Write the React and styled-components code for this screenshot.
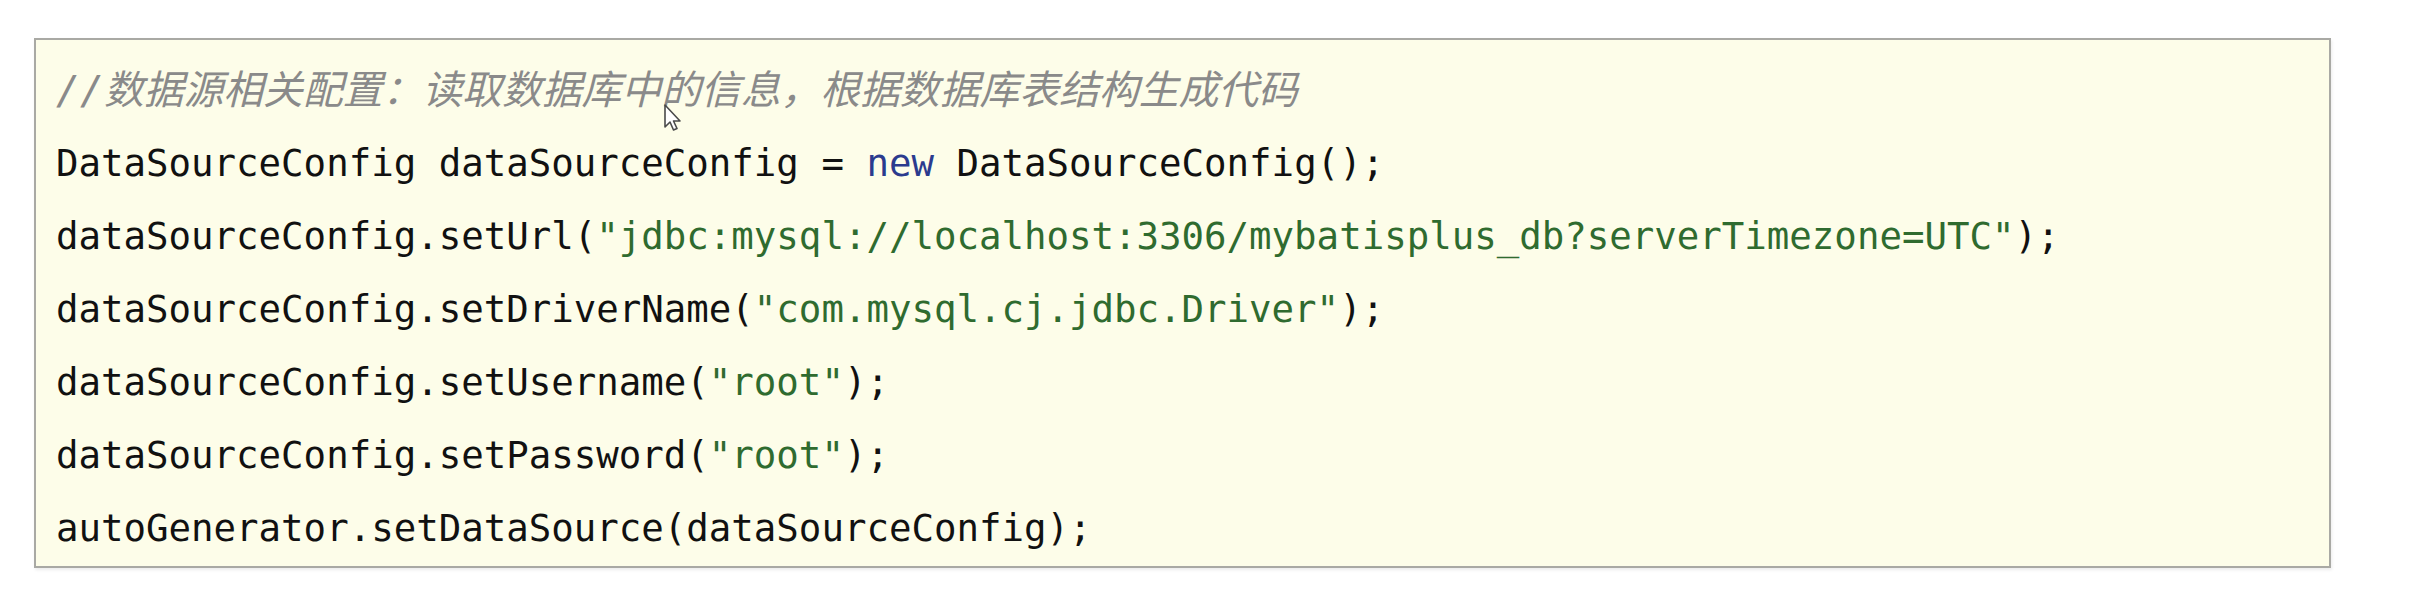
import React from "react";
import styled, { createGlobalStyle } from "styled-components";

const Global = createGlobalStyle`
  html, body { margin: 0; padding: 0; background: #ffffff; }
  body { width: 2412px; height: 606px; overflow: hidden; }
`;

const Page = styled.div`
  padding: 38px 0 0 34px;
`;

const CodeBox = styled.div`
  position: relative;
  box-sizing: border-box;
  width: 2297px;
  height: 530px;
  background: #fdfde9;
  border: 2px solid #a9a9a4;
  box-shadow: 1px 2px 3px rgba(0, 0, 0, 0.08);
  padding: 14px 0 0 20px;
  display: flex;
  flex-direction: column;
`;

const Line = styled.div`
  height: 73px;
  line-height: 73px;
  white-space: pre;
  font-family: "DejaVu Sans Mono", "Noto Sans CJK SC", monospace;
  font-size: 37.4px;
  color: #111111;
`;

const Comment = styled.span`
  font-family: "DejaVu Sans Mono", "Noto Sans CJK SC", monospace;
  font-style: italic;
  font-size: 39.8px;
  color: #8a8a8a;
`;

const Keyword = styled.span`
  color: #2b3b8e;
`;

const Str = styled.span`
  color: #2f6b2f;
`;

const Cursor = styled.svg`
  position: absolute;
  left: 627px;
  top: 63px;
  width: 20px;
  height: 30px;
`;

export default function App() {
  return (
    <>
      <Global />
      <Page>
        <CodeBox>
          <Line>
            <Comment>//数据源相关配置：读取数据库中的信息，根据数据库表结构生成代码</Comment>
          </Line>
          <Line>
            DataSourceConfig dataSourceConfig = <Keyword>new</Keyword> DataSourceConfig();
          </Line>
          <Line>
            dataSourceConfig.setUrl(<Str>"jdbc:mysql://localhost:3306/mybatisplus_db?serverTimezone=UTC"</Str>);
          </Line>
          <Line>
            dataSourceConfig.setDriverName(<Str>"com.mysql.cj.jdbc.Driver"</Str>);
          </Line>
          <Line>
            dataSourceConfig.setUsername(<Str>"root"</Str>);
          </Line>
          <Line>
            dataSourceConfig.setPassword(<Str>"root"</Str>);
          </Line>
          <Line>autoGenerator.setDataSource(dataSourceConfig);</Line>
          <Cursor viewBox="0 0 20 30">
            <path
              d="M2 2 L2 24 L7 19 L10.5 27 L14 25.5 L10.5 18 L17 18 Z"
              fill="#ffffff"
              stroke="#4a4a4a"
              strokeWidth="1.6"
              strokeLinejoin="round"
            />
          </Cursor>
        </CodeBox>
      </Page>
    </>
  );
}
